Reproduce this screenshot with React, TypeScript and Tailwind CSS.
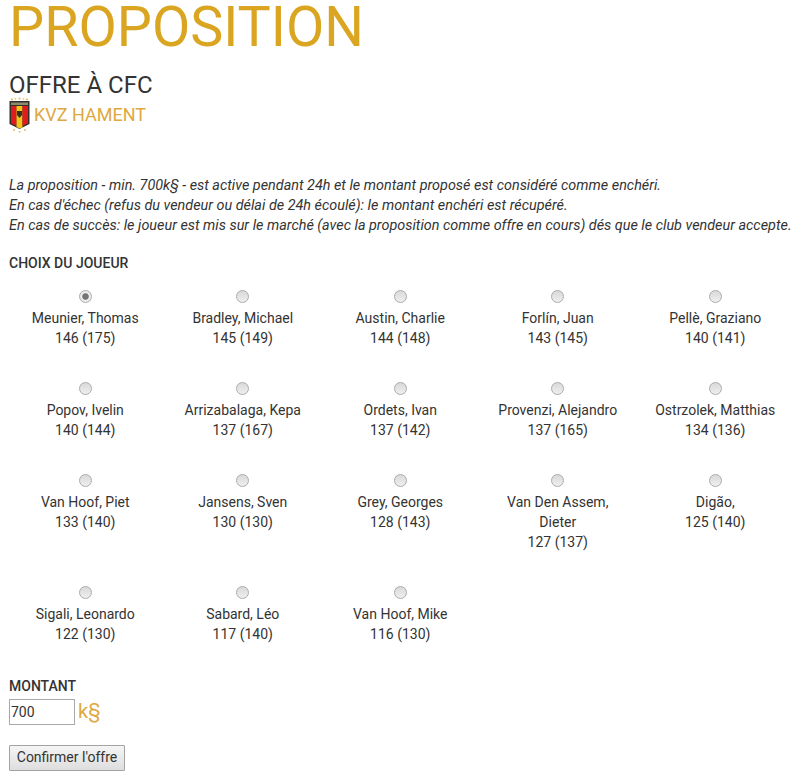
const players = [
  { name: "Meunier, Thomas", score: "146 (175)" },
  { name: "Bradley, Michael", score: "145 (149)" },
  { name: "Austin, Charlie", score: "144 (148)" },
  { name: "Forlín, Juan", score: "143 (145)" },
  { name: "Pellè, Graziano", score: "140 (141)" },
  { name: "Popov, Ivelin", score: "140 (144)" },
  { name: "Arrizabalaga, Kepa", score: "137 (167)" },
  { name: "Ordets, Ivan", score: "137 (142)" },
  { name: "Provenzi, Alejandro", score: "137 (165)" },
  { name: "Ostrzolek, Matthias", score: "134 (136)" },
  { name: "Van Hoof, Piet", score: "133 (140)" },
  { name: "Jansens, Sven", score: "130 (130)" },
  { name: "Grey, Georges", score: "128 (143)" },
  { name: "Van Den Assem, Dieter", score: "127 (137)" },
  { name: "Digão,", score: "125 (140)" },
  { name: "Sigali, Leonardo", score: "122 (130)" },
  { name: "Sabard, Léo", score: "117 (140)" },
  { name: "Van Hoof, Mike", score: "116 (130)" },
];

function Crest() {
  return (
    <svg width="21" height="36" viewBox="0 0 21 36" className="shrink-0">
      <circle cx="3" cy="2.5" r="1" fill="#e0b84a" />
      <circle cx="10.5" cy="1.5" r="1" fill="#e0b84a" />
      <circle cx="18" cy="2.5" r="1" fill="#e0b84a" />
      <circle cx="6.5" cy="2" r="0.8" fill="#e0b84a" />
      <circle cx="14.5" cy="2" r="0.8" fill="#e0b84a" />
      <path d="M0.5 4H20.5V27L10.5 32L0.5 27Z" fill="#33302a" />
      <path d="M2 9H7.5V29L2 26.2Z" fill="#e01b1b" />
      <path d="M7.5 9H13.5V30.5L10.5 31.5L7.5 30Z" fill="#f2c318" />
      <path d="M13.5 9H19V26.2L13.5 29Z" fill="#e01b1b" />
      <rect x="2" y="5.5" width="17" height="2.5" fill="#8d8a70" />
      <path d="M8 14H13V18L10.5 21L8 18Z" fill="#3a2f1c" />
      <circle cx="5" cy="33" r="0.9" fill="#e0b84a" />
      <circle cx="10.5" cy="34.8" r="0.9" fill="#e0b84a" />
      <circle cx="16" cy="33" r="0.9" fill="#e0b84a" />
    </svg>
  );
}

export default function App() {
  return (
    <div className="w-[807px] h-[783px] overflow-hidden bg-white pl-[9px] text-[14px] leading-5 text-[#333] font-['Roboto',sans-serif]">
      <h1 className="text-[55.7px] leading-[54px] text-[#daa520] font-normal">PROPOSITION</h1>
      <h2 className="mt-[18px] text-[24px] leading-[26px] text-[#333] font-normal">OFFRE À CFC</h2>
      <div className="flex items-center gap-1 -mt-[1px] h-[36px] text-[18px] text-[#dfa841]">
        <Crest />
        <span>KVZ HAMENT</span>
      </div>

      <p className="mt-[43px] text-[14.4px] italic whitespace-nowrap">
        La proposition - min. 700k§ - est active pendant 24h et le montant proposé est considéré comme enchéri.
        <br />
        En cas d'échec (refus du vendeur ou délai de 24h écoulé): le montant enchéri est récupéré.
        <br />
        En cas de succès: le joueur est mis sur le marché (avec la proposition comme offre en cours) dés que le club vendeur accepte.
      </p>

      <div className="mt-[17px] font-medium">CHOIX DU JOUEUR</div>

      <div className="-ml-[2.5px] mt-[10px] grid w-[787.5px] grid-cols-5">
        {players.map((p, i) => (
          <label key={p.name} className="flex flex-col items-center px-[15px] pb-[27px] text-center">
            <input
              type="radio"
              name="joueur"
              defaultChecked={i === 0}
              className="mt-[7px] mb-[5px] h-[13px] w-[13px] appearance-none rounded-full border border-[#ababab] bg-gradient-to-b from-[#d9d9d9] to-[#efefef] checked:bg-[radial-gradient(circle,#757575_0,#757575_36%,#ececec_48%)]"
            />
            <span>{p.name}</span>
            <span>{p.score}</span>
          </label>
        ))}
      </div>

      <div className="mt-[5px] mb-[3px] font-medium">MONTANT</div>
      <div className="flex items-start gap-[3px]">
        <input
          defaultValue="700"
          className="h-[26px] w-[66px] border border-[#a9a9a9] px-[1px] text-[14px] text-[#333]"
        />
        <span className="text-[20px] leading-[24px] text-[#dfa841]">k§</span>
      </div>
      <button className="mt-[20px] h-[26px] w-[116px] rounded-[1px] border border-[#a3a3a3] bg-gradient-to-b from-[#f5f5f5] to-[#dedede] pb-[2px] text-[14px] text-[#333]">
        Confirmer l'offre
      </button>
    </div>
  );
}
